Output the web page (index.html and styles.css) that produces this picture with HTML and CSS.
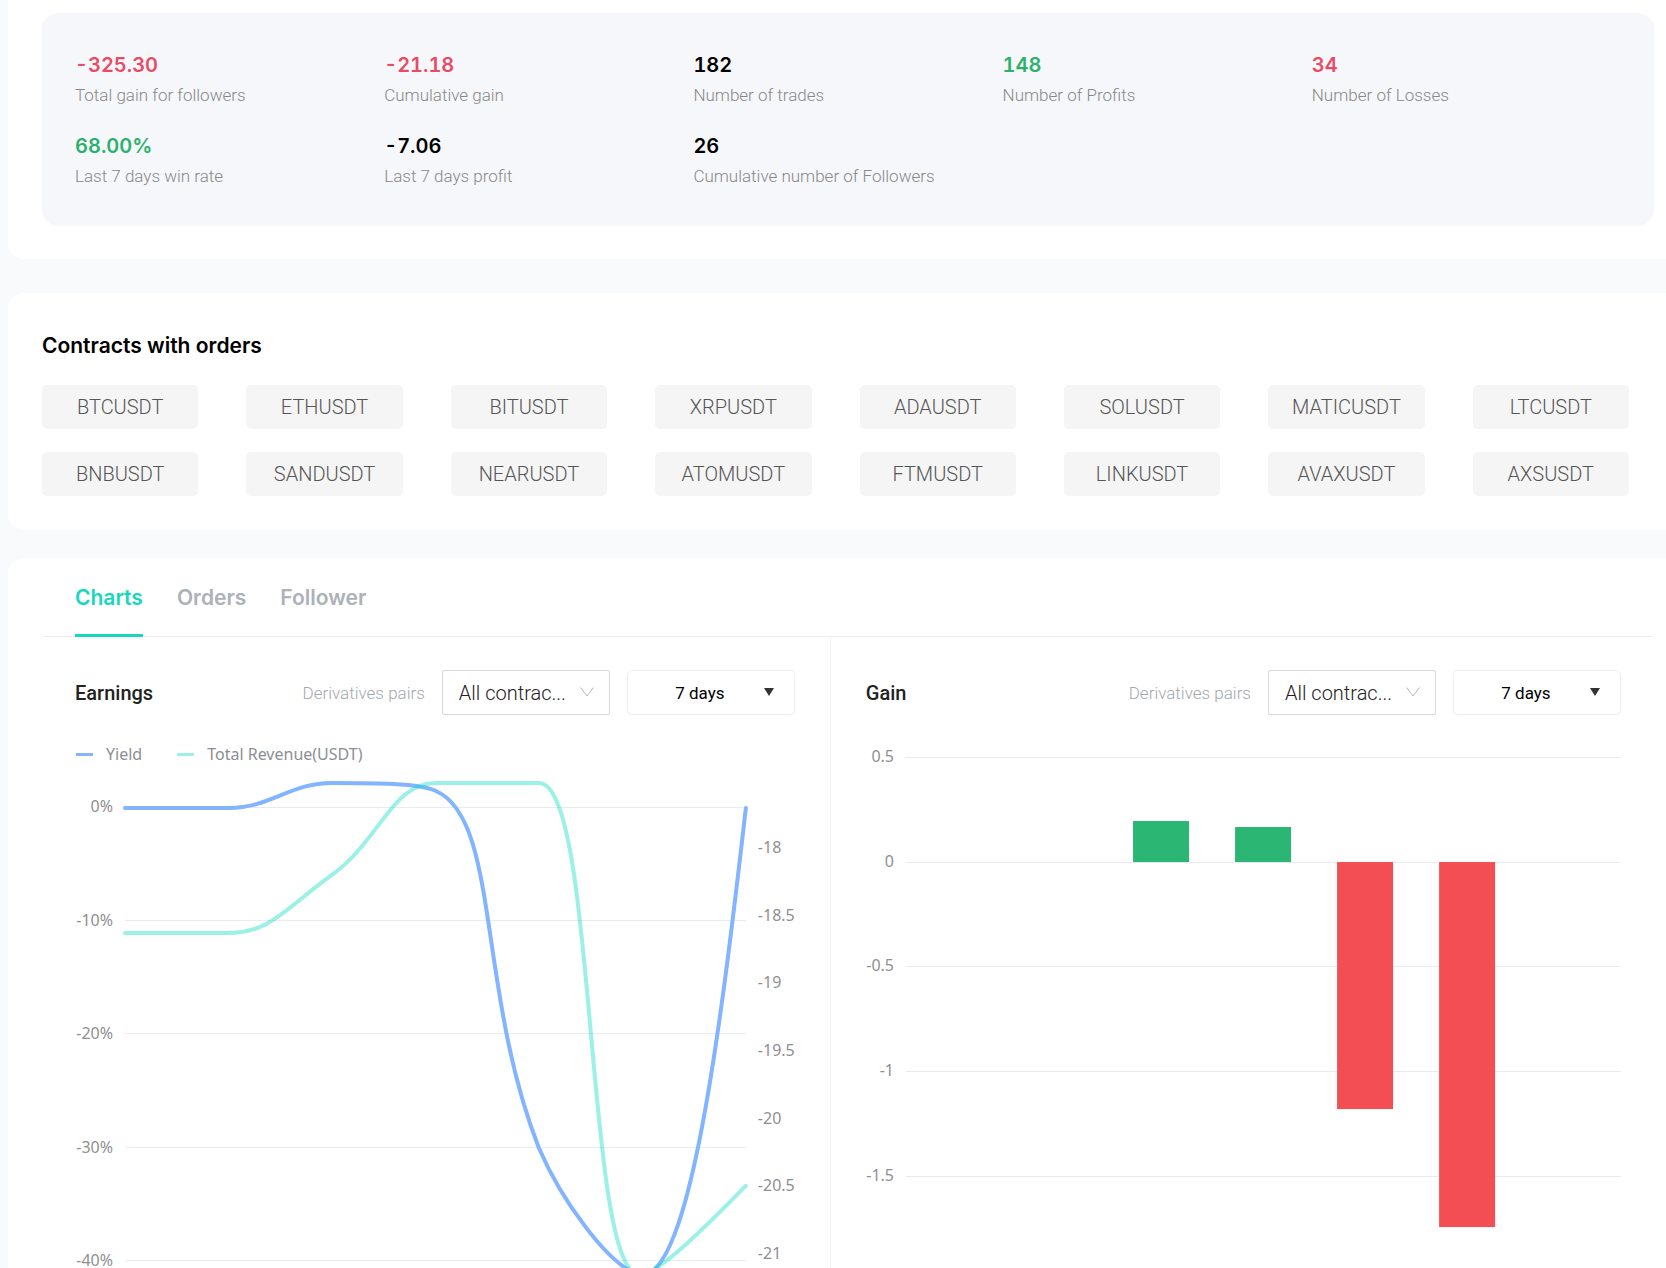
FILE: index.html
```html
<!DOCTYPE html>
<html lang="en">
<head>
  <meta charset="UTF-8" />
  <meta name="viewport" content="width=device-width, initial-scale=1.0"/>
  <title>Trader Details</title>
  <link rel="stylesheet" href="styles.css">
</head>
<body>
  <main class="page">
    <section class="card card-stats">
      <div class="stats">
        <div class="stat"><div class="stat-value loss">-325.30</div><div class="stat-label">Total gain for followers</div></div>
        <div class="stat"><div class="stat-value loss">-21.18</div><div class="stat-label">Cumulative gain</div></div>
        <div class="stat"><div class="stat-value">182</div><div class="stat-label">Number of trades</div></div>
        <div class="stat"><div class="stat-value profit">148</div><div class="stat-label">Number of Profits</div></div>
        <div class="stat"><div class="stat-value loss">34</div><div class="stat-label">Number of Losses</div></div>
        <div class="stat"><div class="stat-value profit">68.00%</div><div class="stat-label">Last 7 days win rate</div></div>
        <div class="stat"><div class="stat-value">-7.06</div><div class="stat-label">Last 7 days profit</div></div>
        <div class="stat"><div class="stat-value">26</div><div class="stat-label">Cumulative number of Followers</div></div>
      </div>
    </section>

    <section class="card card-contracts">
      <h2 class="card-title">Contracts with orders</h2>
      <div class="contracts">
        <span class="contract">BTCUSDT</span>
        <span class="contract">ETHUSDT</span>
        <span class="contract">BITUSDT</span>
        <span class="contract">XRPUSDT</span>
        <span class="contract">ADAUSDT</span>
        <span class="contract">SOLUSDT</span>
        <span class="contract">MATICUSDT</span>
        <span class="contract">LTCUSDT</span>
        <span class="contract">BNBUSDT</span>
        <span class="contract">SANDUSDT</span>
        <span class="contract">NEARUSDT</span>
        <span class="contract">ATOMUSDT</span>
        <span class="contract">FTMUSDT</span>
        <span class="contract">LINKUSDT</span>
        <span class="contract">AVAXUSDT</span>
        <span class="contract">AXSUSDT</span>
      </div>
    </section>

    <section class="card card-charts">
      <nav class="tabs">
        <button class="tab active" type="button">Charts</button>
        <button class="tab" type="button">Orders</button>
        <button class="tab" type="button">Follower</button>
      </nav>

      <div class="charts">
        <div class="chart-col">
          <div class="chart-head">
            <h3 class="chart-title">Earnings</h3>
            <label class="chart-label" for="earningsPair">Derivatives pairs</label>
            <div class="select-box">
              <select class="select-pair" id="earningsPair"><option>All contrac...</option></select>
              <svg class="arrow-open" viewBox="0 0 14 10"><path d="M0.5 0.5L7 9L13.5 0.5"/></svg>
            </div>
            <div class="select-box">
              <select class="select-days" aria-label="Earnings period"><option>7 days</option></select>
              <svg class="arrow-solid" viewBox="0 0 10 8"><path d="M0 0H10L5 8Z"/></svg>
            </div>
          </div>
          <div class="legend">
            <span class="legend-item yield">Yield</span>
            <span class="legend-item revenue">Total Revenue(USDT)</span>
          </div>
          <svg class="chart" viewBox="0 0 720 498">
            <path class="grid" d="M50 38H671M50 151H671M50 264H671M50 378H671M50 491H671"/>
            <g class="axis axis-end">
              <text x="38" y="42">0%</text>
              <text x="38" y="156">-10%</text>
              <text x="38" y="269">-20%</text>
              <text x="38" y="383">-30%</text>
              <text x="38" y="496">-40%</text>
            </g>
            <g class="axis">
              <text x="683" y="83">-18</text>
              <text x="683" y="151">-18.5</text>
              <text x="683" y="218">-19</text>
              <text x="683" y="286">-19.5</text>
              <text x="683" y="354">-20</text>
              <text x="683" y="421">-20.5</text>
              <text x="683" y="489">-21</text>
            </g>
            <path class="line line-yield" d="M50 38H154C195 38 215 13 257 13C298 13 345 13 361 21C425 49 402 220 464 378C485 427 535 500 567 505C615 505 645 265 671 38"/>
            <path class="line line-revenue" d="M50 163H154C195 163 211 138 257 105C306 69 317 13 361 13H464C523 13 509 505 565 505C585 505 645 442 671 416"/>
          </svg>
        </div>

        <div class="chart-col">
          <div class="chart-head">
            <h3 class="chart-title">Gain</h3>
            <label class="chart-label" for="gainPair">Derivatives pairs</label>
            <div class="select-box">
              <select class="select-pair" id="gainPair"><option>All contrac...</option></select>
              <svg class="arrow-open" viewBox="0 0 14 10"><path d="M0.5 0.5L7 9L13.5 0.5"/></svg>
            </div>
            <div class="select-box">
              <select class="select-days" aria-label="Gain period"><option>7 days</option></select>
              <svg class="arrow-solid" viewBox="0 0 10 8"><path d="M0 0H10L5 8Z"/></svg>
            </div>
          </div>
          <svg class="chart" viewBox="0 0 755 525">
            <path class="grid" d="M40 15H755M40 120H755M40 224H755M40 329H755M40 434H755"/>
            <g class="axis axis-end">
              <text x="28" y="20">0.5</text>
              <text x="28" y="125">0</text>
              <text x="28" y="229">-0.5</text>
              <text x="28" y="334">-1</text>
              <text x="28" y="439">-1.5</text>
            </g>
            <rect class="bar-up" x="267" y="79" width="56" height="41"/>
            <rect class="bar-up" x="369" y="85" width="56" height="35"/>
            <rect class="bar-down" x="471" y="120" width="56" height="247"/>
            <rect class="bar-down" x="573" y="120" width="56" height="365"/>
          </svg>
        </div>
      </div>
    </section>
  </main>
</body>
</html>
```
FILE: styles.css
```css
* {
  box-sizing: border-box;
}

body {
  margin: 0;
  background: #f9fafc;
  color: #000;
  font-family: Roboto, "Liberation Sans", sans-serif;
}

.page {
  padding-left: 8px;
}

.card {
  background: #fff;
  border-radius: 16px 0 0 16px;
  padding-left: 34px;
  padding-right: 12px;
}

/* trader stats */
.card-stats {
  border-top-left-radius: 0;
  padding-top: 13px;
  padding-bottom: 33px;
  margin-bottom: 34px;
}

.stats {
  display: grid;
  grid-template-columns: repeat(5, 1fr);
  row-gap: 21px;
  padding: 36px 33px;
  background: #f6f7fb;
  border-radius: 16px;
}

.stat-value {
  font-family: Inter, "Liberation Sans", sans-serif;
  font-size: 20px;
  font-variant-numeric: tabular-nums;
  font-weight: 600;
  line-height: 32px;
}

.stat-value.loss {
  color: #e94b64;
}

.stat-value.profit {
  color: #2bb16c;
}

.stat-label {
  color: #888;
  font-size: 17px;
  font-weight: 300;
  line-height: 28px;
}

/* contracts */
.card-contracts {
  padding-top: 35px;
  padding-bottom: 34px;
  padding-right: 37px;
  margin-bottom: 28px;
}

.card-title {
  margin: 0 0 21px;
  font-family: Inter, "Liberation Sans", sans-serif;
  font-size: 21px;
  font-weight: 600;
  line-height: 36px;
}

.contracts {
  display: grid;
  grid-template-columns: repeat(8, 1fr);
  gap: 23px 48px;
}

.contract {
  background: #f5f5f5;
  border-radius: 5px;
  color: #555;
  font-size: 20px;
  font-weight: 300;
  line-height: 44px;
  text-align: center;
}

/* tabs */
.card-charts {
  border-bottom-left-radius: 0;
}

.tabs {
  display: flex;
  gap: 34px;
  padding: 0 33px;
  border-bottom: 1px solid #eee;
}

.tab {
  margin-bottom: -1px;
  padding: 26px 0 22px;
  background: none;
  border: none;
  border-bottom: 3px solid transparent;
  color: #adb1b8;
  cursor: pointer;
  font-family: Inter, "Liberation Sans", sans-serif;
  font-size: 21px;
  font-weight: 600;
  line-height: 28px;
}

.tab.active {
  border-bottom-color: #15d8bd;
  color: #15d8bd;
}

/* charts */
.charts {
  display: grid;
  grid-template-columns: 23fr 24fr;
}

.chart-col {
  min-width: 0;
  padding: 33px 33px 0 35px;
}

.chart-col:first-child {
  padding: 33px 35px 0 33px;
  border-right: 1px solid #f5f5f5;
}

.chart-head {
  display: flex;
  align-items: center;
  gap: 17px;
  margin-bottom: 27px;
}

.chart-title {
  flex: 1;
  margin: 0;
  color: #222;
  font-size: 20px;
  font-weight: 500;
}

.chart-label {
  color: #a4a8ae;
  font-size: 17px;
  font-weight: 300;
}

.select-box {
  position: relative;
  width: 168px;
}

.select-box select {
  display: block;
  width: 100%;
  height: 45px;
  appearance: none;
  background: #fff;
  font-family: inherit;
}

.select-pair {
  padding: 0 16px;
  border: 1px solid #d9d9d9;
  border-radius: 2px;
  color: #222;
  font-size: 20px;
  font-weight: 300;
}

.select-days {
  padding: 0 38px 0 16px;
  border: 1px solid #eee;
  border-radius: 5px;
  color: #000;
  font-size: 17px;
  text-align-last: center;
}

.select-box svg {
  position: absolute;
  pointer-events: none;
}

.arrow-open {
  top: 17px;
  right: 16px;
  width: 14px;
  height: 10px;
  fill: none;
  stroke: #b4b4b4;
}

.arrow-solid {
  top: 18px;
  right: 21px;
  width: 10px;
  height: 8px;
  fill: #333;
}

.legend {
  display: flex;
  gap: 35px;
  margin-bottom: 4px;
  padding-left: 1px;
  color: #8b8e94;
  font-family: "Noto Sans", sans-serif;
  font-size: 16px;
  line-height: 24px;
}

.legend-item {
  display: flex;
  align-items: center;
  gap: 13px;
}

.legend-item::before {
  content: "";
  width: 17px;
  height: 3px;
  background: #82b4ff;
}

.legend-item.revenue::before {
  background: #9bf1e5;
}

.chart {
  display: block;
  width: 100%;
}

.grid {
  stroke: #e8ebf0;
  shape-rendering: crispEdges;
}

.axis {
  fill: #8f8f8f;
  font-family: "Noto Sans", sans-serif;
  font-size: 16px;
}

.axis-end {
  text-anchor: end;
}

.line {
  fill: none;
  stroke-width: 4;
  stroke-linecap: round;
}

.line-yield {
  stroke: #82b4ff;
}

.line-revenue {
  stroke: #05dbbe;
  stroke-opacity: 0.4;
}

.bar-up {
  fill: #2cb673;
}

.bar-down {
  fill: #f24e53;
}
```
